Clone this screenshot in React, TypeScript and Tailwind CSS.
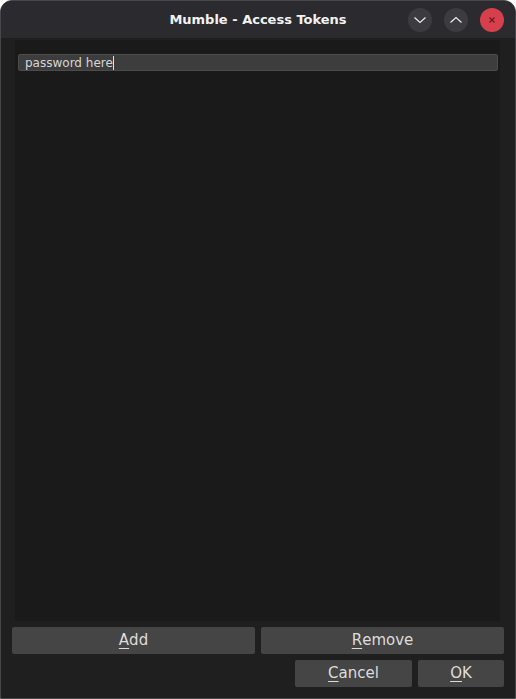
import React from "react";

const font = { fontFamily: '"DejaVu Sans", "Liberation Sans", sans-serif' };

const CircleButton = ({ kind }: { kind: "min" | "max" | "close" }) => (
  <div
    className={`w-[24px] h-[24px] rounded-full flex items-center justify-center ${
      kind === "close" ? "bg-[#d6404d]" : "bg-[#3c3c40]"
    }`}
  >
    {kind === "min" && (
      <svg width="14" height="14" viewBox="0 0 14 14">
        <path d="M1.5 4.5 L7 9.5 L12.5 4.5" fill="none" stroke="#ececec" strokeWidth="1.2" />
      </svg>
    )}
    {kind === "max" && (
      <svg width="14" height="14" viewBox="0 0 14 14">
        <path d="M1.5 9.5 L7 4.5 L12.5 9.5" fill="none" stroke="#ececec" strokeWidth="1.2" />
      </svg>
    )}
    {kind === "close" && (
      <svg width="10" height="10" viewBox="0 0 10 10">
        <path d="M2.5 2.5 L7.5 7.5 M7.5 2.5 L2.5 7.5" fill="none" stroke="#6e1822" strokeWidth="1.2" />
      </svg>
    )}
  </div>
);

const DialogButton = ({ label, mnemonic, className }: { label: string; mnemonic: number; className: string }) => (
  <button
    className={`h-[27px] bg-[#454545] rounded-[2px] text-[15px] text-[#dcdcdc] flex items-center justify-center ${className}`}
  >
    {label.slice(0, mnemonic)}
    <span className="underline underline-offset-[3px]">{label[mnemonic]}</span>
    {label.slice(mnemonic + 1)}
  </button>
);

export default function App() {
  return (
    <div
      style={font}
      className="w-[516px] h-[699px] bg-[#1f1f1f] border border-[#474747] rounded-t-[12px] overflow-hidden flex flex-col"
    >
      {/* Title bar */}
      <div className="h-[37px] bg-[#2b2b2f] flex items-center px-[11px] shrink-0">
        <div className="w-[96px]" />
        <div className="flex-1 text-center text-[13px] font-bold text-[#f2f2f2]">Mumble - Access Tokens</div>
        <div className="w-[96px] flex gap-[12px]">
          <CircleButton kind="min" />
          <CircleButton kind="max" />
          <CircleButton kind="close" />
        </div>
      </div>

      {/* Body */}
      <div className="flex-1 flex flex-col px-[11px] pt-[2px] pb-[11px]">
        <div className="flex-1 mx-[3px] mr-[4px] bg-[#1a1a1a] pt-[14px] px-[3px] pr-[2px]">
          <div className="h-[17px] bg-[#3d3d3d] border border-[#4c4c4c] rounded-[2px] flex items-center px-[6px] text-[12px] text-[#d6d6d6]">
            password here
            <span className="inline-block w-[1px] h-[14px] bg-[#e0e0e0]" />
          </div>
        </div>

        <div className="flex gap-[6px] mt-[6px]">
          <DialogButton label="Add" mnemonic={0} className="flex-1" />
          <DialogButton label="Remove" mnemonic={0} className="flex-1" />
        </div>
        <div className="flex justify-end gap-[6px] mt-[6px]">
          <DialogButton label="Cancel" mnemonic={0} className="w-[117px]" />
          <DialogButton label="OK" mnemonic={0} className="w-[86px]" />
        </div>
      </div>
    </div>
  );
}
